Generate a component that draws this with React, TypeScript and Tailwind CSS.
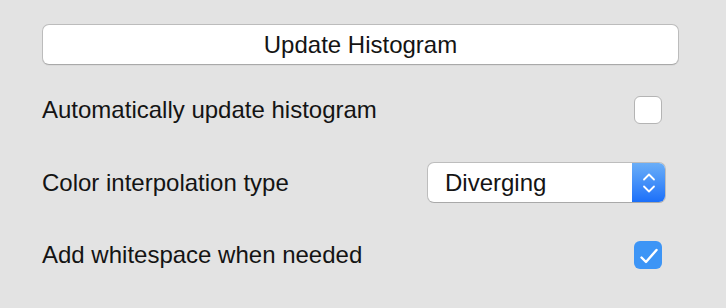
import { useState } from "react";

export default function App() {
  const [auto, setAuto] = useState(false);
  const [whitespace, setWhitespace] = useState(true);
  const [interp, setInterp] = useState("Diverging");

  return (
    <div
      className="h-[308px] w-[726px] bg-[#e3e3e3] pl-[42px] pr-[47px] pt-[24px] text-[24px] text-[#141414]"
      style={{ fontFamily: '"Liberation Sans", Arial, sans-serif' }}
    >
      <button className="flex h-[41px] w-full items-center justify-center rounded-[7px] border border-[#bcbcbc] border-b-[#a9a9a9] bg-white leading-none shadow-[0_1px_0_rgba(0,0,0,0.04)]">
        Update Histogram
      </button>

      <div className="mt-[31px] flex h-[28px] items-center justify-between pr-[17px]">
        <span className="leading-[28px]">Automatically update histogram</span>
        <Checkbox checked={auto} onChange={() => setAuto(!auto)} />
      </div>

      <div className="mt-[38px] flex h-[41px] items-center justify-between pr-[13px]">
        <span className="leading-[28px]">Color interpolation type</span>
        <div className="flex h-[41px] w-[239px] overflow-hidden rounded-[7px] border border-[#bdbdbd] border-b-[#a9a9a9] bg-white">
          <div className="flex flex-1 items-center pl-[17px] leading-none">{interp}</div>
          <button
            onClick={() => setInterp(interp === "Diverging" ? "Sequential" : "Diverging")}
            className="flex w-[33px] items-center justify-center bg-gradient-to-b from-[#6aaef7] to-[#1b6ff9]"
          >
            <svg width="16" height="26" viewBox="0 0 16 26" fill="none" stroke="white" strokeWidth="1.8" strokeLinecap="round" strokeLinejoin="round">
              <path d="M3 9.5 8 4.5l5 5" />
              <path d="M3 16.5 8 21.5l5-5" />
            </svg>
          </button>
        </div>
      </div>

      <div className="mt-[38px] flex h-[28px] items-center justify-between pr-[17px]">
        <span className="leading-[28px]">Add whitespace when needed</span>
        <Checkbox checked={whitespace} onChange={() => setWhitespace(!whitespace)} />
      </div>
    </div>
  );
}

function Checkbox({ checked, onChange }: { checked: boolean; onChange: () => void }) {
  return (
    <button
      onClick={onChange}
      className={
        checked
          ? "h-[28px] w-[28px] rounded-[6px] bg-[#3d95f6]"
          : "h-[28px] w-[28px] rounded-[6px] border-[1.5px] border-[#b4b4b4] bg-white"
      }
    >
      {checked && (
        <svg width="28" height="28" viewBox="0 0 28 28" fill="none" stroke="white" strokeWidth="2.4" strokeLinecap="round" strokeLinejoin="round">
          <path d="M7.5 16.5 12 21 22.5 9" />
        </svg>
      )}
    </button>
  );
}
